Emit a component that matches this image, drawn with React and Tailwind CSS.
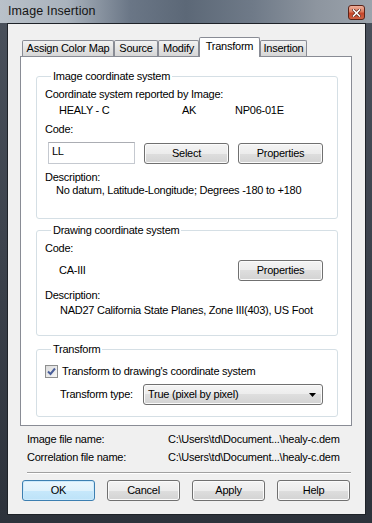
import React from 'react'

const Btn = ({ children, className = '', focused }) => (
  <div
    className={`flex items-center justify-center h-[21px] rounded-[3px] border ${
      focused
        ? 'border-[#3c7fb1] bg-[linear-gradient(#eaf6fd_0%,#dff2fc_50%,#c7e8fb_50%,#bde3f8_100%)] shadow-[inset_0_0_0_1px_#cdeafc]'
        : 'border-[#707070] bg-[linear-gradient(#f4f4f4_0%,#ececec_50%,#dedede_50%,#d3d3d3_100%)] shadow-[inset_0_0_0_1px_#fbfbfb]'
    } ${className}`}
  >
    {children}
  </div>
)

const Group = ({ title, className = '', children }) => (
  <fieldset className={`ml-[15px] w-[302px] rounded-[3px] border border-[#d5dfe5] pl-[8px] ${className}`}>
    <legend className="ml-[6px] px-[2px] leading-[13px]">{title}</legend>
    {children}
  </fieldset>
)

const Tab = ({ label, w, active }) =>
  active ? (
    <div className={`${w} h-[20px] -mb-px relative z-10 bg-white border border-b-0 border-[#898c95] rounded-t-[2px] flex items-start justify-center pt-[2px] leading-[13px]`}>
      {label}
    </div>
  ) : (
    <div className={`${w} h-[16px] bg-[linear-gradient(#f2f2f2,#e4e4e4_50%,#d6d6d6)] border border-b-0 border-[#898c95] rounded-t-[2px] flex items-center justify-center leading-[13px]`}>
      {label}
    </div>
  )

const App = () => {
  const path = 'C:\\Users\\td\\Document...\\healy-c.dem'
  return (
    <div className="w-[372px] h-[523px] bg-[linear-gradient(to_bottom,#4a515c,#2d323b)] font-['Liberation_Sans',Arial,sans-serif] text-[11px] tracking-[-0.25px] text-[#000] flex flex-col">
      {/* title bar */}
      <div className="h-[23px] shrink-0 flex items-center justify-between pl-[8px] pr-[7px] bg-[linear-gradient(to_right,#b9c1c9_0%,#a9b2bc_18%,#6a7686_35%,#5c6877_50%,#6f7a88_68%,#8d959f_85%,#9ba3ac_100%)]">
        <span className="text-[12.5px] text-[#141414] tracking-[0.1px]">Image Insertion</span>
        <div className="mt-[2px] w-[17px] h-[15px] rounded-[3px] border border-[#5b2419] bg-[linear-gradient(#eeb09c,#dc7a5c_45%,#c5452a_55%,#cf6244)] flex items-center justify-center">
          <svg width="9" height="8" viewBox="0 0 9 8">
            <path d="M1.5 1 L7.5 7 M7.5 1 L1.5 7" stroke="#5a2318" strokeWidth="3" strokeLinecap="square" />
            <path d="M1.5 1 L7.5 7 M7.5 1 L1.5 7" stroke="#fff" strokeWidth="1.6" strokeLinecap="square" />
          </svg>
        </div>
      </div>

      {/* client */}
      <div className="ml-[7px] w-[359px] h-[492px] border border-[#1e2228] bg-[#f0f0f0] flex flex-col">
        {/* tabs */}
        <div className="mt-[13px] ml-[14px] flex items-end h-[19px]">
          <Tab label="Assign Color Map" w="w-[92px]" />
          <Tab label="Source" w="w-[44px]" />
          <Tab label="Modify" w="w-[41px]" />
          <Tab label="Transform" w="w-[61px]" active />
          <Tab label="Insertion" w="w-[47px]" />
        </div>

        {/* tab page */}
        <div className="ml-[12px] w-[332px] h-[370px] border border-[#898c95] bg-white flex flex-col">
          <Group title="Image coordinate system" className="mt-[13px] h-[149px]">
            <div className="mt-[5px] leading-[13px]">Coordinate system reported by Image:</div>
            <div className="mt-[3px] leading-[13px] flex">
              <span className="ml-[14px] w-[123px]">HEALY - C</span>
              <span className="w-[53px]">AK</span>
              <span>NP06-01E</span>
            </div>
            <div className="mt-[6px] leading-[13px]">Code:</div>
            <div className="mt-[6px] flex items-center">
              <div className="ml-[3px] w-[87px] h-[22px] border border-[#c5c9d0] border-t-[#abadb3] bg-white pl-[3px] pt-[2px] leading-[13px]">
                LL
              </div>
              <Btn className="ml-[9px] w-[85px]">Select</Btn>
              <Btn className="ml-[9px] w-[85px]">Properties</Btn>
            </div>
            <div className="mt-[7px] leading-[13px]">Description:</div>
            <div className="ml-[11px] leading-[13px]">No datum, Latitude-Longitude; Degrees -180 to +180</div>
          </Group>

          <Group title="Drawing coordinate system" className="mt-[5px] h-[112px]">
            <div className="mt-[5px] leading-[13px]">Code:</div>
            <div className="mt-[5px] flex items-center">
              <span className="ml-[14px] w-[179px] leading-[13px]">CA-III</span>
              <Btn className="w-[85px]">Properties</Btn>
            </div>
            <div className="mt-[8px] leading-[13px]">Description:</div>
            <div className="mt-[2px] ml-[15px] leading-[13px]">NAD27 California State Planes, Zone III(403), US Foot</div>
          </Group>

          <Group title="Transform" className="mt-[7px] h-[74px]">
            <div className="mt-[9px] flex items-center h-[13px]">
              <div className="w-[13px] h-[13px] border border-[#8e8f8f] bg-[linear-gradient(135deg,#dcdcdc,#f6f6f6)] flex items-center justify-center">
                <svg width="11" height="11" viewBox="0 0 11 11">
                  <path d="M2 5.5 L4.5 8 L9 2.5" fill="none" stroke="#4a5f9a" strokeWidth="2" />
                </svg>
              </div>
              <span className="ml-[4px] leading-[13px]">Transform to drawing's coordinate system</span>
            </div>
            <div className="mt-[6px] flex items-center">
              <span className="ml-[15px] w-[83px] leading-[13px]">Transform type:</span>
              <div className="w-[180px] h-[21px] rounded-[3px] border border-[#707070] bg-[linear-gradient(#f4f4f4_0%,#ececec_50%,#dedede_50%,#d3d3d3_100%)] shadow-[inset_0_0_0_1px_#fbfbfb] flex items-center justify-between pl-[4px] pr-[6px]">
                <span className="leading-[13px]">True (pixel by pixel)</span>
                <svg width="7" height="4" viewBox="0 0 7 4">
                  <path d="M0 0 H7 L3.5 4 Z" fill="#000" />
                </svg>
              </div>
            </div>
          </Group>
        </div>

        {/* file names */}
        <div className="mt-[7px] ml-[19px] flex leading-[13px]">
          <span className="w-[141px]">Image file name:</span>
          <span>{path}</span>
        </div>
        <div className="mt-[5px] ml-[19px] flex leading-[13px]">
          <span className="w-[141px]">Correlation file name:</span>
          <span>{path}</span>
        </div>

        <div className="mt-[8px] ml-[19px] w-[324px] h-[2px] border-t border-[#a0a0a0] border-b border-b-white" />

        <div className="mt-[6px] ml-[14px] flex gap-[12px]">
          <Btn focused className="w-[73px]">OK</Btn>
          <Btn className="w-[73px]">Cancel</Btn>
          <Btn className="w-[73px]">Apply</Btn>
          <Btn className="w-[73px]">Help</Btn>
        </div>
      </div>
    </div>
  )
}

export default App
